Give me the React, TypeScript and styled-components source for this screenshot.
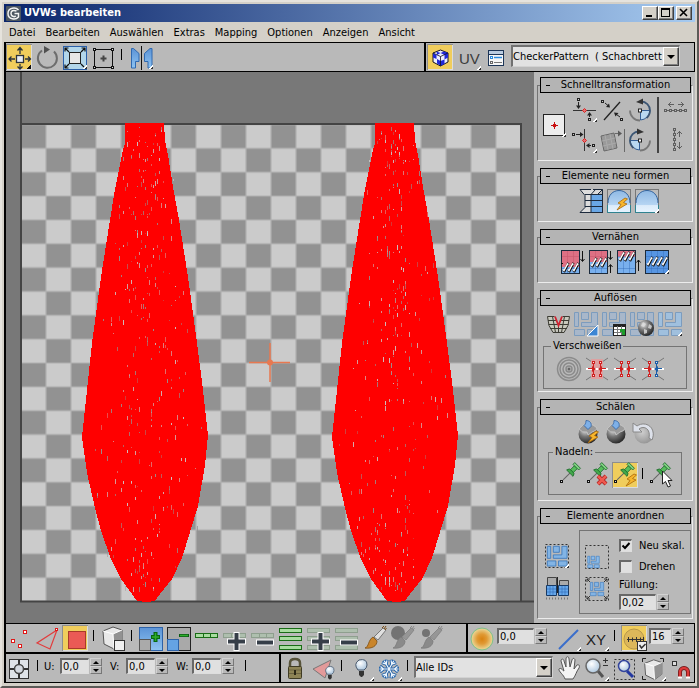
import React, { useState } from 'react';
import styled, { createGlobalStyle, css } from 'styled-components';

const GlobalStyle = createGlobalStyle`
  * { box-sizing: border-box; }
  body { margin: 0; background: #d4d0c8; }
  body, button, input, select, legend {
    font-family: "DejaVu Sans Condensed", "DejaVu Sans", sans-serif;
    font-size: 11px;
    color: #000;
  }
  button { padding: 0; border: 0; background: none; }
`;

const face = '#b9b9b9';

/* ---------- window frame ---------- */

const Window = styled.div`
  display: flex;
  flex-direction: column;
  min-height: 100vh;
  padding: 2px 2px 3px;
  background: #d4d0c8;
  border: 2px solid;
  border-color: #e6e3dd #5c5a57 #5c5a57 #e6e3dd;
  white-space: nowrap;
`;

const TitleBar = styled.header`
  display: flex;
  align-items: center;
  height: 18px;
  padding: 0 3px 0 2px;
  background: linear-gradient(90deg, #0a246a, #a6caf0);
`;

const Title = styled.h1`
  flex: 1;
  margin: 0 0 0 3px;
  font-size: 11px;
  line-height: 18px;
  font-weight: bold;
  color: #fff;
`;

const CaptionButton = styled.button<{ $apart?: boolean }>`
  width: 16px;
  height: 14px;
  margin-left: ${(p) => (p.$apart ? 2 : 0)}px;
  background: #d4d0c8;
  border: 1px solid;
  border-color: #fff #404040 #404040 #fff;
  box-shadow: inset -1px -1px #808080;
  svg { display: block; }
`;

const MenuBar = styled.nav`
  display: flex;
  gap: 10px;
  height: 20px;
  padding: 1px 5px 0;
`;

const MenuItem = styled.button`
  line-height: 19px;
`;

/* ---------- tool bars ---------- */

const Bar = styled.div<{ $top: number; $bottom: number }>`
  display: flex;
  background: ${face};
  border: solid #000;
  border-width: ${(p) => p.$top}px 1px ${(p) => p.$bottom}px 2px;
`;

const Section = styled.div<{ $width?: number; $divided?: boolean }>`
  display: flex;
  align-items: center;
  gap: 2px;
  height: 28px;
  ${(p) => (p.$width ? css`flex: 0 0 ${p.$width}px;` : css`flex: 1;`)}
  ${(p) => p.$divided && css`border-left: 2px solid #000; padding-left: 1px;`}
`;

const ToolButton = styled.button<{ $active?: boolean }>`
  flex: none;
  width: 26px;
  height: 26px;
  svg { display: block; overflow: visible; }
  ${(p) =>
    p.$active &&
    css`
      background: #f0cd5c;
      box-shadow: inset 1px 1px #8e8e8e, inset -1px -1px #dcdcdc;
    `}
`;

const Tick = styled.span`
  flex: none;
  align-self: flex-start;
  width: 8px;
  height: 11px;
  margin-top: 6px;
  background: linear-gradient(#000, #000) 3px 0 / 1px 100% no-repeat;
`;

const Field = styled.label`
  display: flex;
  align-items: center;
  gap: 1px;
  margin: 0 6px 4px 0;
`;

const FieldName = styled.span`
  width: 15px;
`;

const NumberInput = styled.input<{ $width: number }>`
  width: ${(p) => p.$width}px;
  height: 16px;
  padding: 0 1px;
  background: #e0e0e0;
  border: solid;
  border-width: 2px 1px 1px 2px;
  border-color: #686868 #dedede #dedede #686868;
  outline: none;
`;

const Spinner = styled.span`
  display: flex;
  flex-direction: column;
  width: 12px;
`;

const SpinButton = styled.button<{ $down?: boolean }>`
  height: 8px;
  border: 1px solid;
  border-color: #d2d2d2 #777 #777 #d2d2d2;
  display: grid;
  place-items: center;
  &::after {
    content: '';
    border: solid transparent;
    border-width: 0 3px 3px;
    border-bottom-color: #000;
    transform: ${(p) => (p.$down ? 'rotate(180deg)' : 'none')};
  }
`;

const Combo = styled.div<{ $width?: number }>`
  position: relative;
  ${(p) => (p.$width ? css`width: ${p.$width}px;` : css`flex: 1;`)}
  margin: 0 1px 2px 0;
`;

const Select = styled.select`
  appearance: none;
  display: block;
  width: 100%;
  height: 22px;
  padding: 0 16px 0 0;
  background: #e2e2e2;
  border: solid;
  border-width: 2px 1px 1px 2px;
  border-color: #717171 #d2d2d2 #d2d2d2 #717171;
  border-radius: 0;
  outline: none;
`;

const ComboArrow = styled.span`
  position: absolute;
  top: 2px;
  right: 1px;
  bottom: 1px;
  width: 16px;
  display: grid;
  place-items: center;
  pointer-events: none;
  background: #d4d0c8;
  border: 1px solid;
  border-color: #fff #404040 #404040 #fff;
  box-shadow: inset -1px -1px #808080;
  &::after {
    content: '';
    border: solid transparent;
    border-width: 4px 4px 0;
    border-top-color: #000;
  }
`;

/* ---------- main area ---------- */

const Main = styled.main`
  display: flex;
  flex: 1;
`;

const Viewport = styled.div`
  flex: 1;
  min-width: 0;
  background: #787878;
  border-left: 2px solid #000;
  svg { display: block; width: 100%; height: auto; }
`;

const Sidebar = styled.aside`
  flex: 0 0 161px;
  display: flex;
  flex-direction: column;
  gap: 7px;
  padding: 5px 2px 3px 3px;
  background: ${face};
`;

const RolloutHeader = styled.button`
  position: relative;
  display: block;
  width: calc(100% - 5px);
  height: 16px;
  margin: 0 2px 0 3px;
  padding: 0 10px;
  line-height: 14px;
  text-align: center;
  background: #b4b4b4;
  border: 1px solid #000;
  &::before {
    content: '';
    position: absolute;
    left: 5px;
    top: 7px;
    width: 4px;
    height: 1px;
    background: #000;
  }
`;

const RolloutBody = styled.div<{ $bottom: number }>`
  margin-top: -8px;
  padding: 11px 0 ${(p) => p.$bottom}px;
  border: 1px solid;
  border-color: #747474 #ececec #ececec #747474;
`;

const ToolRow = styled.div<{ $indent?: number; $gap?: number }>`
  display: flex;
  align-items: center;
  gap: ${(p) => p.$gap ?? 2}px;
  padding-left: ${(p) => p.$indent ?? 0}px;
`;

const QuickTools = styled.div`
  display: flex;
  align-items: center;
  justify-content: center;
  gap: 4px;
`;

const QuickGrid = styled.div<{ $columns: number }>`
  display: grid;
  grid-template-columns: repeat(${(p) => p.$columns}, 26px);
  gap: 4px 2px;
`;

const Rule = styled.span`
  align-self: stretch;
  width: 2px;
  background: #444;
`;

const Group = styled.fieldset<{ $indent: number; $above: number; $pad: number }>`
  min-width: 0;
  margin: ${(p) => p.$above}px ${(p) => p.$indent}px 0;
  padding: 4px 0 6px ${(p) => p.$pad}px;
  border: 1px solid #747474;
`;

const Legend = styled.legend`
  margin-left: -5px;
  padding: 0 2px;
  line-height: 12px;
`;

const Arrange = styled.div`
  display: flex;
  align-items: center;
  gap: 9px;
  padding: 2px 1px 0 6px;
`;

const IconColumn = styled.div`
  display: flex;
  flex-direction: column;
  gap: 6px;
`;

const ArrangeBox = styled.div`
  flex: 1;
  display: flex;
  align-items: center;
  gap: 9px;
  padding: 4px 0 3px 4px;
  border: 1px solid #747474;
`;

const Options = styled.div`
  display: flex;
  flex-direction: column;
`;

const CheckLabel = styled.label`
  display: flex;
  align-items: center;
  gap: 7px;
  height: 21px;
`;

const OptionLabel = styled.label`
  line-height: 16px;
`;

const CheckBox = styled.input`
  appearance: none;
  width: 13px;
  height: 13px;
  margin: 0;
  background: #e0e0e0;
  border: solid;
  border-width: 2px 1px 1px 2px;
  border-color: #686868 #dedede #dedede #686868;
  &:checked {
    background: #e0e0e0
      url("data:image/svg+xml,%3Csvg xmlns='http://www.w3.org/2000/svg' viewBox='0 0 10 10'%3E%3Cpath d='M1.5 4.5 4 7 8.500 2' fill='none' stroke='%23000' stroke-width='2'/%3E%3C/svg%3E")
      center / 10px 10px no-repeat;
  }
`;

const FieldRow = styled.div`
  display: flex;
  gap: 1px;
  margin-top: 1px;
`;

/* ---------- icons ---------- */

const Svg = ({ children }: { children: React.ReactNode }) => (
  <svg width="26" height="26" viewBox="0 0 26 26" fill="none" aria-hidden="true">
    {children}
  </svg>
);

const Corner = ({ dark, x = 0, y = 0 }: { dark?: boolean; x?: number; y?: number }) => (
  <g transform={`translate(${x} ${y})`} shapeRendering="crispEdges">
    <path d="M25 20v5h-5z" fill={dark ? '#111' : '#fff'} />
    {!dark && <path d="M24 23h1v2h-2v-1h1z" fill="#333" />}
  </g>
);

const Gradients = () => (
  <svg width="0" height="0" display="block" aria-hidden="true">
    <defs>
      <linearGradient id="blue" x1="0" y1="0" x2="0" y2="1">
        <stop offset="0" stopColor="#5b93d6" /><stop offset="1" stopColor="#8fc4f2" />
      </linearGradient>
      <linearGradient id="sky" x1="0" y1="0" x2="0" y2="1">
        <stop offset="0" stopColor="#8fb9e4" /><stop offset=".65" stopColor="#b5d4f2" /><stop offset=".7" stopColor="#dcebfa" /><stop offset="1" stopColor="#e6f3fe" />
      </linearGradient>
      <radialGradient id="ball" cx=".35" cy=".3" r=".75">
        <stop offset="0" stopColor="#e0e0e0" /><stop offset=".45" stopColor="#777" /><stop offset="1" stopColor="#222" />
      </radialGradient>
      <radialGradient id="paleBall" cx=".4" cy=".4" r=".7">
        <stop offset="0" stopColor="#cfcfcf" /><stop offset="1" stopColor="#8f8f8f" />
      </radialGradient>
      <radialGradient id="sun">
        <stop offset="0" stopColor="#d98210" /><stop offset=".45" stopColor="#e09a35" /><stop offset=".9" stopColor="#e9cf8a" /><stop offset="1" stopColor="#b9cf9a" />
      </radialGradient>
      <radialGradient id="glass" cx=".4" cy=".35" r=".7">
        <stop offset="0" stopColor="#fff" /><stop offset="1" stopColor="#a9c4dc" />
      </radialGradient>
    </defs>
  </svg>
);

const Bolt = ({ x, y }: { x: number; y: number }) => (
  <path transform={`translate(${x} ${y})`} d="M8 0 1 5l3 1.500L0 12l10-6-3.500-1.500L10.500 1z" fill="#f7b52c" stroke="#a8670a" strokeWidth=".8" />
);

const MoveIcon = () => (
  <Svg>
    <g stroke="#2b333c" strokeWidth="1.300">
      <rect x="10.500" y="11.500" width="7" height="7" fill="#e8edf4" />
      <path d="M14 10V4M11.500 6.500 14 3.500l2.500 3M14 20v5M11.500 22.500 14 25l2.500-2.500M9 15H3M5.500 12.500 3 15l2.500 2.500M19 15h5M22 12.500l2.500 2.500-2.500 2.500" />
    </g>
    <Corner dark />
  </Svg>
);
const RotateIcon = () => (
  <Svg>
    <path d="M8 6.500A9.500 9.500 0 1 0 20 7.500" stroke="#6d6d6d" strokeWidth="2" />
    <path d="m10 2 6 3.500-6 4z" fill="#505050" />
  </Svg>
);
const ScaleIcon = () => (
  <Svg>
    <rect x="1.500" y="2.500" width="23" height="23" fill="#b3d6ea" stroke="#2b5fa8" />
    <rect x="7.500" y="8.500" width="11" height="11" fill="#e6e6e6" stroke="#222" />
    <path d="m7 8-3.500-3.500M3 7.500V4h3.500M19 8l3.500-3.500M19.500 4H23v3.500M7 20l-3.500 3.500M3 20.500V24h3.500M19 20l3 3" stroke="#111" strokeWidth="1.200" />
    <Corner />
  </Svg>
);
const FreeformIcon = () => (
  <Svg>
    <rect x="4.500" y="5.500" width="18" height="18" stroke="#111" />
    <g fill="#ddd" stroke="#111">
      <rect x="3.500" y="4.500" width="2" height="2" /><rect x="21.500" y="4.500" width="2" height="2" />
      <rect x="3.500" y="22.500" width="2" height="2" /><rect x="21.500" y="22.500" width="2" height="2" />
    </g>
    <path d="M13.500 11.500v6M10.500 14.500h6" stroke="#444" strokeWidth="2" />
  </Svg>
);
const MirrorIcon = () => (
  <Svg>
    <path d="M3.500 4.500h2l5.500 5v8H7.500V24h-4zM24 4.500h-2l-5.500 5v8H20V24h4z" fill="url(#blue)" stroke="#2f69b0" />
    <path d="M13.500 2v24" stroke="#111" />
    <Corner />
  </Svg>
);
const CheckerCubeIcon = () => (
  <Svg>
    <path d="m13.500 6 7.500 3v9l-7.500 4L6 18V9z" fill="#eef" stroke="#112" />
    <path d="m9.500 7.500 4 1.500L17 7.500 21 9l-3.500 2-4-2-3.500 2zM6 9l3.500 2v4L6 13.500zM10 15l3.500 2v4.500L10 19.500zM17.500 11l3.500-2v4.500l-3.500 2zM13.500 17l4-1.500V20l-4 2z" fill="#2028d8" />
    <path d="m6 9 7.500 3.500L21 9M13.500 12.500V22" stroke="#112" strokeWidth=".8" />
  </Svg>
);
const UvIcon = () => (
  <Svg>
    <text x="4" y="20" fontSize="15" fontFamily="Liberation Sans, sans-serif" fill="#3c3c3c">UV</text>
    <Corner x={1} y={1} />
  </Svg>
);
const ListIcon = () => (
  <Svg>
    <rect x="5.500" y="6.500" width="15" height="15" fill="#f6f6f6" stroke="#1d3557" />
    <path d="M6 7h14v3H6z" fill="#b9cbe0" /><path d="M6 10.500h14" stroke="#1d3557" />
    <path d="M11 13.500h8" stroke="#2a8be0" strokeWidth="1.500" /><path d="M11 18.500h8" stroke="#777" />
    <rect x="7.500" y="12.500" width="2" height="2" stroke="#2a8be0" /><rect x="7.500" y="17.500" width="2" height="2" stroke="#666" />
  </Svg>
);

const PivotIcon = () => (
  <Svg>
    <rect x="2.500" y="2.500" width="21" height="21" fill="#ececec" stroke="#222" />
    <path d="M13.500 10v7M10 13.500h7" stroke="#c81010" /><rect x="12" y="12" width="3" height="3" fill="#c81010" />
    <Corner />
  </Svg>
);
const AlignHIcon = () => (
  <Svg>
    <path d="M2 13.500h23" stroke="#333" />
    <path d="M7.500 5v6M18.500 20v-4" stroke="#222" />
    <path d="M5 8.500h5L7.500 12zM16 18.500h5L18.500 15z" fill="#222" />
    <rect x="6.500" y="1.500" width="2" height="2" stroke="#222" fill="#ccc" /><rect x="17.500" y="21.500" width="2" height="2" stroke="#222" fill="#ccc" />
    <path d="m13.500 11.500 2 2-2 2-2-2z" fill="#e27070" stroke="#d22" />
    <Corner x={1} />
  </Svg>
);
const AlignVIcon = () => (
  <Svg>
    <path d="M13.500 2v22" stroke="#333" />
    <path d="M5 7.500h6M20 18.500h-4" stroke="#222" />
    <path d="M9 5v5l3.500-2.500zM18.500 16v5L15 18.500z" fill="#222" />
    <rect x="1.500" y="6.500" width="2" height="2" stroke="#222" fill="#ccc" /><rect x="21.500" y="17.500" width="2" height="2" stroke="#222" fill="#ccc" />
    <path d="m13.500 11.500 2 2-2 2-2-2z" fill="#e27070" stroke="#d22" />
    <Corner x={1} y={1} />
  </Svg>
);
const LinearIcon = () => (
  <Svg>
    <path d="M5 23 21 5" stroke="#222" strokeWidth="1.300" />
    <path d="m6 6 3 2.500M21 20l-3.500-2.500" stroke="#222" />
    <path d="M11 10.500 10 6.500 7 10zM15 15.500l1.500 4L19.500 16z" fill="#222" />
    <rect x="2.500" y="3.500" width="2" height="2" stroke="#222" fill="#ccc" /><rect x="21.500" y="21.500" width="2" height="2" stroke="#222" fill="#ccc" />
  </Svg>
);
const SkewIcon = () => (
  <Svg>
    <path d="m2 9 13-3 3 15-13 3z" fill="#9a9a9a" stroke="#696969" />
    <path d="m6 8 3 15M11 7l3 15M3 14l13-3M4 19l13-3" stroke="#aaa" />
    <path d="M16 6.500h4M25.500 2v23" stroke="#696969" /><path d="M19 3.500v6l4-3z" fill="#595959" />
  </Svg>
);
const QuarterIcon = ({ flip }: { flip?: boolean }) => (
  <Svg>
    <g transform={flip ? 'matrix(-1 0 0 1 26 0)' : undefined}>
      <path d="M13.500 13.500H23A10 10 0 0 1 13.500 23z" fill="#b9d8f0" stroke="#345f94" />
      <path d="M3 13.500A10 10 0 0 0 13 23.500" stroke="#777" strokeWidth="1.800" />
      <path d="M14 4.500c5 0 9 4 9 9a10 10 0 0 1-3.500 7.500" stroke="#3c5674" strokeWidth="1.800" />
      <path d="m9 5 7-3.500v6z" fill="#333" /><rect x="11.500" y="12" width="3" height="3" fill="#fff" stroke="#222" />
    </g>
  </Svg>
);
const SpreadIcon = ({ vertical }: { vertical?: boolean }) => (
  <Svg>
    <g stroke="#5f5f5f" transform={vertical ? 'matrix(0 1 1 0 -2 0)' : undefined}>
      <path
        d={vertical
          ? 'M10 18.500H4M7 16l-2.500 2.500L7 21M15 18.500h7M19 16l2.500 2.500L19 21'
          : 'M11 7.500H5M8 5 5.500 7.500 8 10M15 7.500h6M18 5l2.500 2.500L18 10'}
      />
      {[2, 7, 12, 17, 22].map((x) => <rect key={x} x={x - 0.5} y="12.500" width="2" height="2" />)}
      <path d="M4 13.500h2M9 13.500h2M14 13.500h2M19 13.500h2" />
    </g>
  </Svg>
);

const StraightenIcon = () => (
  <Svg>
    <path d="M2 1.500h22.500l-5 5H13v18H2l5-5v-12z" fill="#dcdcdc" />
    <path d="M13 6.500h11.500v18H13z" fill="#69a7e6" />
    <path d="M2 1.500h11M15 1.500h9.500V6M2 1.500l5 6v12l-5 5M17.500 1.500l-4.500 5M24.500 1.500l-5 5M7 6.500h18M2 24.500h23M7 12.500h18M7 18.500h18M13 6v19M24.500 6v19" stroke="#1c2a3c" />
  </Svg>
);
const RelaxIcon = ({ bolt }: { bolt?: boolean }) => (
  <Svg>
    <rect x="1.500" y="1.500" width="23" height="23" fill="#bcbcbc" stroke="#777" />
    <path d="M2 24V14C2 7 7 2.500 13 2.500S24 7 24 14v10z" fill="url(#sky)" />
    <path d="M2 15C2 7 7 2.500 13 2.500S24 7 24 15" stroke="#34639c" />
    <path d="M1.500 17v7.500h23V17" stroke="#2f8390" />
    {bolt ? <Bolt x={11} y={10} /> : <Corner />}
  </Svg>
);

const StitchIcon = ({ kind }: { kind: number }) => {
  const seam = [18, 13, 7, 12][kind];
  const wide = kind === 3;
  const w = wide ? 23 : 18;
  const xs = wide ? [3, 8, 13, 18] : [3, 8, 13];
  return (
    <Svg>
      <rect x="1.500" y="1.500" width={w} height="23" fill={wide ? '#5795e2' : '#79b0ee'} stroke="#1b2a3c" />
      {!wide && <rect x="2" y="2" width="17" height={seam - 2} fill="#de7084" />}
      {!wide && <path d={`M7.500 2v${seam - 2}M13.500 2v${seam - 2}M2 7.500h17`} stroke="#c9586e" strokeOpacity=".6" />}
      <path d={wide ? 'M7.500 2v22M13.500 2v22M19.500 2v22M2 7.500h22M2 19.500h22' : `M7.500 ${seam}V24M13.500 ${seam}V24M2 19.500h17`} stroke="#2f68b6" strokeOpacity=".4" />
      {xs.map((x) => (
        <g key={x}>
          <path d={`M${x} ${seam + 3}l1.500 1L${x + 5} ${seam - 3}l1 .5`} stroke="#111" strokeWidth="2.500" />
          <path d={`M${x} ${seam + 2.5}l1 1L${x + 4.5} ${seam - 3}l1 .5`} stroke="#fff" strokeWidth="1.400" />
        </g>
      ))}
      {kind === 0 && <path d="M22.500 2v10M20.500 10l2 2.500 2-2.500M1 14.500h2" stroke="#111" />}
      {kind === 1 && <path d="M22.500 2v8M20.500 8l2 2.500 2-2.500M22.500 24v-8M20.500 18l2-2.500 2 2.500" stroke="#111" />}
      {kind === 2 && <path d="M22.500 22V11M20.500 13.500l2-2.500 2 2.500" stroke="#111" />}
      {wide && <Corner />}
    </Svg>
  );
};

const BasketIcon = () => (
  <Svg>
    <g transform="translate(1 2)">
      <path d="M1.500 4.500h7l4 8 4-8h7l-1.500 10-4 5H7l-4-5z" fill="#c9c9bd" />
      <path d="M1.500 4.500h7M16.500 4.500h7M2 8.500h8M15 8.500h8M2.500 12.500h20M4 16.500h17M7 20.500h11M1.500 4.500l1.500 9 4 7h11l4-7 1.500-9M6.500 4.500l3 16M18.500 4.500l-3 16M12.500 13v8" stroke="#3c3c34" />
      <path d="m9 4.500 3.500 9 3.500-9" stroke="#cf2230" strokeWidth="1.800" />
    </g>
  </Svg>
);
const Pieces = ({ fill = '#a8b7ca', stroke = '#7c9cbe' }: { fill?: string; stroke?: string }) => (
  <g fill={fill} stroke={stroke}>
    <path d="M1.500 1.500h4v14h-4zM8.500 1.500h7v7h-7zM18.500 1.500h6v14h-16v-4h10zM1.500 18.500h10v6h-10zM14.500 18.500h10v6h-10z" />
  </g>
);
const FlattenIcon = ({ kind }: { kind: number }) => (
  <Svg>
    <g transform="translate(0 1)">
      <Pieces fill={kind === 3 ? '#a0c0de' : undefined} />
      {kind === 0 && <path d="M25 14v11H14z" fill="#3c86d4" stroke="#fff" />}
      {kind === 1 && (
        <>
          <rect x="12.500" y="13.500" width="12" height="11" fill="#fff" stroke="#222" />
          <path d="M13 15h11" stroke="#222" strokeWidth="2" /><path d="M16.500 15v9M20.500 15v9M13 18.500h11M13 21.500h11" stroke="#777" />
          <path d="M19 18h5v3h-5zM21 21h3v3h-3z" fill="#1f9c2c" />
        </>
      )}
      {kind === 2 && (
        <>
          <circle cx="17" cy="17" r="8" fill="url(#ball)" />
          <path d="m14 11 3 2-2 3-3-1zM20 13l3 2-1 3-3-1zM15 18l3 1v3l-3 1z" fill="#ddd" fillOpacity=".8" />
        </>
      )}
      {kind === 3 && <Corner />}
    </g>
  </Svg>
);
const TargetIcon = () => (
  <Svg>
    {[3, 6, 9, 11.5].map((r) => <circle key={r} cx="13" cy="13" r={r} stroke="#8b8b8b" strokeWidth="1.500" />)}
    <circle cx="13" cy="13" r="1.500" fill="#666" />
  </Svg>
);
const WeldIcon = ({ kind }: { kind: number }) => {
  const right = kind === 2 ? '#1b5ea8' : '#cf2222';
  return (
    <Svg>
      <path d="m2 2 6 4M24 2l-6 4M2 24l6-4M24 24l-6-4" stroke="#777" />
      {kind === 0 && <path d="M7 3h12v20H7z" fill="#dea0a0" />}
      <path d="M2 13h22" stroke="#fff" strokeWidth="2" />
      <path d="M9.500 7v12" stroke="#cf2222" /><path d="M16.500 7v12" stroke={right} />
      <path d="M4 12.500h4" stroke="#cf2222" /><path d="M8 10v6l4-3z" fill="#cf2222" />
      <path d="M22 12.500h-4" stroke={right} /><path d="M18 10v6l-4-3z" fill={right} />
      <g stroke="#cf2222" fill="#f3e3e3"><rect x="8.500" y="5.500" width="2" height="2" /><rect x="8.500" y="18.500" width="2" height="2" /></g>
      <g stroke={right} fill="#f3e3e3"><rect x="15.500" y="5.500" width="2" height="2" /><rect x="15.500" y="18.500" width="2" height="2" /></g>
    </Svg>
  );
};

const PeelIcon = ({ kind }: { kind: number }) => (
  <Svg>
    <circle cx="13" cy="15" r="9.500" fill={kind === 2 ? 'url(#paleBall)' : 'url(#ball)'} />
    {kind < 2 && (
      <>
        <path d="M4 10q3 4 8 3l1 3 4-3q5-1 5-4l-4-3H8z" fill="#9a9a9a" stroke="#c9c9c9" strokeWidth=".8" />
        <path d="M11 1.500c4 0 6 3 5 6l-3 3-4-4c1-1 2-2 2-5z" fill="#7eb0e8" stroke="#2f5f9f" strokeWidth=".8" />
      </>
    )}
    {kind === 0 && <Bolt x={13} y={12} />}
    {kind === 2 && <path d="M2 4v9h9L8 10c5-4 12 0 10 9l3 2C26 9 15 1 6 7z" fill="#dde1ea" stroke="#888" />}
  </Svg>
);
const PinIcon = ({ kind }: { kind: number }) => (
  <Svg>
    <g transform="translate(15 8) rotate(45)">
      <path d="M0 4v10" stroke="#666" />
      <path d="M-4.500 4.500q0-3.500 4.500-3.500t4.500 3.500z" fill="#43a84b" stroke="#1c6a2c" strokeWidth=".8" />
      <path d="M-2-4h4v5.500h-4z" fill="#57bd5c" stroke="#1c6a2c" strokeWidth=".8" />
      <path d="M-4-6.500h8V-4h-8z" fill="#7fd080" stroke="#1c6a2c" strokeWidth=".8" />
    </g>
    <rect x="2.500" y="18.500" width="2" height="2" fill="#ddd" stroke="#111" />
    {kind === 1 && <path d="m13 14 8 8M21 14l-8 8" stroke="#a81c1c" strokeWidth="4" />}
    {kind === 1 && <path d="m13 14 8 8M21 14l-8 8" stroke="#ee5a50" strokeWidth="2.500" />}
    {kind === 2 && <Bolt x={14} y={12} />}
    {kind === 3 && <path d="M14.500 9v13l3-2.500 2.500 5.500 2.500-1-2.500-5.500h4z" fill="#fff" stroke="#222" />}
  </Svg>
);

const Dashed = () => <rect x="1.500" y="1.500" width="23" height="23" stroke="#333" strokeDasharray="2 2" />;
const PackIcon = ({ kind }: { kind: number }) => (
  <Svg>
    <Dashed />
    {kind === 0 && <g transform="matrix(.86 0 0 .86 2 2)"><Pieces fill="#83b4e4" stroke="#3a78bd" /></g>}
    {kind === 1 && <g transform="matrix(.5 0 0 .5 3 11.500)"><Pieces fill="#8dbbe8" stroke="#2570c0" /></g>}
    {kind === 2 && (
      <>
        <g transform="matrix(.58 0 0 .58 5.500 5.500)"><Pieces fill="#83b4e4" stroke="#3a78bd" /></g>
        <path d="M3 6V3h3M3 3l3 3M20 3h3v3M23 3l-3 3M3 20v3h3M3 23l3-3M23 20v3h-3M23 23l-3-3" stroke="#333" />
      </>
    )}
    {kind === 0 && <Corner />}
  </Svg>
);
const RescaleIcon = () => (
  <Svg>
    <path d="M3.500 2.500h9v8h-9zM15.500 5.500h9v6h-9z" fill="#aaa" stroke="#444" />
    <path d="M2.500 10.500h10v10h-10zM14.500 10.500h10v10h-10z" fill="#66a8ec" stroke="#173a66" />
    <path d="M3 14h9M3 17h9M6 11v9M9 11v9M15 14h9M15 17h9M18 11v9M21 11v9" stroke="#2f68b6" strokeWidth=".6" />
    <path d="M13.500 2v16" stroke="#222" /><path d="M2 23.500h23" stroke="#777" strokeWidth="2" strokeDasharray="1 2" />
  </Svg>
);

const VertexIcon = () => (
  <Svg>
    <g fill="#fff" stroke="#e01818"><rect x="17.500" y="5.500" width="3" height="3" /><rect x="5.500" y="14.500" width="3" height="3" /><rect x="12.500" y="19.500" width="3" height="3" /></g>
  </Svg>
);
const EdgeIcon = () => (
  <Svg><path d="M23 5 3 18l13 6z" stroke="#e23c3c" strokeWidth="1.200" /><rect x="21.500" y="3.500" width="2" height="2" fill="#fff" stroke="#e01818" /></Svg>
);
const PolygonIcon = () => (
  <Svg><rect x="6.500" y="6.500" width="17" height="17" fill="#ea5a55" stroke="#a83a2a" /></Svg>
);
const Cube = () => (
  <>
    <path d="m3 6 10-4 9 3v13L14 24 4 19z" fill="#e8e8e8" stroke="#555" />
    <path d="m13 9 9-4v13l-8 6z" fill="#929292" /><path d="m3 6 10 3 9-4M13 9l1 15" stroke="#fff" />
  </>
);
const ElementIcon = () => (
  <Svg><Cube /><rect x="14.500" y="15.500" width="10" height="10" fill="#f0f0f0" stroke="#333" /></Svg>
);
const GrowIcon = ({ shrink }: { shrink?: boolean }) => (
  <Svg>
    <rect x="1.500" y="2.500" width="23" height="23" fill={shrink ? '#a9a9a9' : 'url(#blue)'} stroke={shrink ? '#222' : '#2d62a8'} />
    <rect x="1.500" y="14.500" width="11" height="11" fill={shrink ? '#65a3e4' : '#aaa'} stroke={shrink ? '#2d62a8' : '#555'} />
    {shrink ? <path d="M13 10.500h10" stroke="#0b5b13" strokeWidth="3" /> : <path d="M17.500 7v10M13 12h9" stroke="#086810" strokeWidth="4" />}
    <path d={shrink ? 'M14 10.500h8' : 'M17.500 8v8M14 12h7'} stroke="#2fae2c" strokeWidth="1.500" />
  </Svg>
);
const LoopIcon = ({ ring, sign }: { ring?: boolean; sign?: string }) => {
  const rows = ring ? [3.5, 11.5, 20.5] : [8.5];
  return (
    <Svg>
      <g opacity={sign ? 0.55 : 1}>
        {rows.map((y) => (
          <rect key={y} x="1.500" y={y} width="22" height="4" fill={sign ? '#a6c4a6' : '#a8dca0'} stroke={sign ? '#6c8a6c' : '#196c16'} />
        ))}
        {!ring && <path d="M9.500 8v5M16.500 8v5" stroke={sign ? '#6c8a6c' : '#196c16'} />}
      </g>
      {sign && <path d={sign === '+' ? 'M14.500 7v19M5 16.500h19' : 'M6 17.500h18'} stroke="#fff" strokeWidth="6" />}
      {sign && <path d={sign === '+' ? 'M14.500 8v17M6 16.500h17' : 'M7 17.500h16'} stroke="#363e48" strokeWidth="4" />}
    </Svg>
  );
};
const BrushIcon = ({ dot }: { dot?: number }) => (
  <Svg>
    {dot && <circle cx="8" cy="8" r={dot} fill="#737373" />}
    <path d="m21 3 3 2-8 10-4-3z" fill={dot ? '#969696' : '#e0e0e0'} stroke={dot ? '#888' : '#777'} />
    <path d="m11 12 4 4c0 5-5 8-12 7 4-1 3-8 8-11z" fill={dot ? '#8a8a8a' : '#c9852c'} stroke={dot ? '#7b7b7b' : '#7a4d14'} strokeWidth=".8" />
    <path d="m20 3 2-2M23 5l1.500-2M22 4l2-3" stroke={dot ? '#888' : '#7a4d14'} />
  </Svg>
);
const SoftIcon = ({ limit }: { limit?: boolean }) => (
  <Svg>
    <circle cx="13" cy="14" r={limit ? 10 : 11} fill={limit ? '#dcb75a' : 'url(#sun)'} stroke={limit ? '#b8984a' : '#84c08a'} />
    {limit && (
      <>
        <path d="M6 14.500h17M7.500 12v5M11.500 12.500v4M15.500 12v5M19.500 12.500v4M22.500 12v5" stroke="#333" />
        <rect x="16.500" y="16.500" width="9" height="9" fill="#eee" stroke="#333" /><path d="m18.500 20 2 3 4-4" stroke="#333" strokeWidth="1.500" />
      </>
    )}
  </Svg>
);
const LineIcon = () => (
  <Svg><path d="M4 24 23 5" stroke="#3a6ecb" strokeWidth="2" /><Corner x={1} y={1} /></Svg>
);
const XyIcon = () => (
  <Svg>
    <text x="3" y="20" fontSize="15" fontFamily="Liberation Sans, sans-serif" fill="#222">XY</text>
    <Corner x={1} y={1} />
  </Svg>
);
const AbsoluteIcon = () => (
  <Svg>
    <rect x="3.500" y="4.500" width="19" height="19" fill="#dfe3e8" stroke="#333" />
    <path d="M13 4v6M13 18v6M3 14h6M17 14h6" stroke="#333" strokeWidth="2" /><circle cx="13" cy="14" r="4.500" fill="#d5dae1" stroke="#444" strokeWidth="1.500" />
  </Svg>
);
const LockIcon = () => (
  <Svg>
    <path d="M8 12V8q0-4 5-4t5 4v4" stroke="#57533a" strokeWidth="2.500" />
    <rect x="6.500" y="11.500" width="13" height="12" rx="1" fill="#8d8355" stroke="#3f3b24" /><path d="M7 15h12M7 18.500h12" stroke="#6a6240" /><rect x="12" y="15" width="2" height="5" fill="#2c2817" />
  </Svg>
);
const Bulb = ({ x, y, s = 1 }: { x: number; y: number; s?: number }) => (
  <g transform={`matrix(${s} 0 0 ${s} ${x} ${y})`}>
    <path d="M3 11q-5-6 1-10 8-2 8 5 0 3-3 5z" fill="url(#glass)" stroke="#49586c" />
    <path d="M4 12h5v4l-2 2H6l-2-2z" fill="#333" />
  </g>
);
const FilterIcon = () => (
  <Svg><path d="M21 5 3 14l12 9z" fill="#e39a9a" stroke="#777" /><Bulb x={15} y={11} s={0.75} /></Svg>
);
const DisplayIcon = () => (
  <Svg><Bulb x={7} y={4} /><Corner x={1} y={1} /></Svg>
);
const FreezeIcon = () => (
  <Svg>
    {['#2463a8', '#f0f8ff'].map((c, i) => (
      <g key={c} stroke={c} strokeWidth={i ? 1.2 : 3}>
        {[30, 90, 150].map((a) => (
          <path key={a} transform={`rotate(${a} 13 14)`} d={i ? 'M13 4.500v19M10.500 5.500 13 8.500l2.500-3M10.500 22.500 13 19.500l2.500 3' : 'M13 4v20M10 5 13 8.500l3-3.500M10 23l3-3.500 3 3.500'} />
        ))}
      </g>
    ))}
    <Corner x={1} y={1} />
  </Svg>
);
const HandIcon = () => (
  <Svg>
    <path d="M9 24c-1-4-7-8-6-10 2-2 4 2 5 2L5 6c0-3 3-2 3 0l2 6V4c0-3 3-3 3 0l1 8 2-7c1-3 3-1 3 0l-1 9 3-4c2-1 3 1 2 3-3 4-3 7-6 11z" fill="#f4f4f4" stroke="#555" />
  </Svg>
);
const ZoomIcon = ({ region }: { region?: boolean }) => (
  <Svg>
    {region && <rect x="2.500" y="4.500" width="20" height="20" stroke="#333" strokeDasharray="2 2" />}
    <path d={region ? 'm15 16 6 6' : 'm14 16 5 6'} stroke={region ? '#2338a0' : '#555'} strokeWidth="3" />
    <circle cx={region ? 12 : 9} cy="11" r={region ? 5.5 : 7} fill="url(#glass)" stroke={region ? '#33449c' : '#666'} strokeWidth="1.500" />
    {!region && <path d="M21.500 3v5M19 5.500h5M19 10.500h5" stroke="#333" />}
    {!region && <Corner y={1} />}
  </Svg>
);
const ExtentsIcon = () => (
  <Svg>
    <g transform="matrix(.9 0 0 .9 2 3)"><Cube /></g>
    <path d="M2.500 7V3.500H6M20 3.500h3.500V7M2.500 21v3.500H6" stroke="#222" />
    <Corner x={1} y={1} />
  </Svg>
);
const SnapIcon = () => (
  <Svg>
    <g transform="translate(-3 0)">
      <rect x="7.500" y="6.500" width="4" height="4" fill="#ddd" stroke="#333" />
      <path d="M15 23v-6a4 4 0 0 1 8 0v6" stroke="#6b1414" strokeWidth="4" /><path d="M15 22v-5a4 4 0 0 1 8 0v5" stroke="#dc3a3a" strokeWidth="2.500" />
      <path d="M13 22.500h4M21 22.500h4" stroke="#fff" strokeWidth="2" />
    </g>
  </Svg>
);

/* ---------- UV canvas ---------- */

const SHELL =
  'M125 123H164L165 141 168 155 173 187 179 220 188 277 197 343 203 390 208 435 205 465 198 506 190 532 182 558 172 579 160 594 155 601 147 602 137 601 132 594 121 579 111 559 101 531 95 508 87 473 82 437 87 390 92 343 101 277 110 220 114 195 119 170 123 150 125 144Z';

// Gaps between mesh lines, gathered in columns four units apart.
function makeSpecks(seed: number) {
  let s = seed;
  const rnd = () => {
    s = (s * 16807) % 2147483647;
    return s / 2147483647;
  };
  return Array.from({ length: 330 }, () => {
    const y = 126 + rnd() * 464;
    const half = y < 437 ? 16 + ((y - 126) / 311) * 34 : 50 - ((y - 437) / 160) ** 2 * 40;
    const x = 145 + (rnd() + rnd() + rnd() - 1.5) * half * 1.1;
    return {
      x: Math.round(x / 4) * 4 + (rnd() > 0.6 ? 2 : 0) - 1,
      y: Math.round(y),
      h: 1 + Math.floor(rnd() * 5),
      fill: rnd() > 0.45 ? '#cbcbcb' : '#949494',
      opacity: 0.35 + rnd() * 0.6,
    };
  });
}
const shells = [{ dx: 0, specks: makeSpecks(4711) }, { dx: 250, specks: makeSpecks(9203) }];

const UvCanvas = () => (
  <svg viewBox="6 72 528 551" role="img" aria-label="UV-Ansicht">
    <defs>
      <pattern id="checker" x="21" y="124.500" width="50" height="47.700" patternUnits="userSpaceOnUse">
        <rect width="50" height="47.700" fill="#cbcbcb" />
        <path d="M0 0h25v23.850H0zM25 23.850h25V47.700H25z" fill="#929292" />
        <path d="M0 0H50M0 23.850H50M0 47.700H50M0 0V47.700M25 0V47.700M50 0V47.700" stroke="#b0b0b0" strokeWidth="1.200" />
      </pattern>
    </defs>
    <rect x="6" y="72" width="528" height="551" fill="#787878" />
    <rect x="21" y="124" width="500" height="477" fill="url(#checker)" />
    <path d="M21 72V602M20 124H522M20 601.500H534M521 124V602" stroke="#444" strokeWidth="2" fill="none" />
    {shells.map((shell) => (
      <g key={shell.dx} transform={`translate(${shell.dx} 0)`} shapeRendering="crispEdges">
        <path d={SHELL} fill="#f00" />
        {shell.specks.map((p, i) => (
          <rect key={i} x={p.x} y={p.y} width="1" height={p.h} fill={p.fill} opacity={p.opacity} />
        ))}
      </g>
    ))}
    <path d="M249 362.500H290M270 343V382" stroke="#e87850" strokeWidth="1.500" /><circle cx="270" cy="362.500" r="3" fill="#e87850" />
  </svg>
);

/* ---------- building blocks ---------- */

const Tool = ({ label, active, children }: { label: string; active?: boolean; children: React.ReactNode }) => (
  <ToolButton type="button" aria-label={label} aria-pressed={active} $active={active}>{children}</ToolButton>
);

const NumberBox = ({ id, label, value, width }: { id: string; label: string; value: string; width: number }) => {
  const [text, setText] = useState(value);
  return (
    <>
      <NumberInput id={id} aria-label={label} $width={width} value={text} onChange={(e) => setText(e.target.value)} />
      <Spinner>
        <SpinButton type="button" aria-label={`${label} erhöhen`} />
        <SpinButton type="button" aria-label={`${label} verringern`} $down />
      </Spinner>
    </>
  );
};

const Rollout = ({ title, bottom = 7, children }: { title: string; bottom?: number; children: React.ReactNode }) => (
  <section>
    <RolloutHeader type="button" aria-expanded="true">{title}</RolloutHeader>
    <RolloutBody $bottom={bottom}>{children}</RolloutBody>
  </section>
);

const menus = ['Datei', 'Bearbeiten', 'Auswählen', 'Extras', 'Mapping', 'Optionen', 'Anzeigen', 'Ansicht'];

export default function App() {
  return (
    <>
      <GlobalStyle />
      <Gradients />
      <Window>
        <TitleBar>
          <svg width="15" height="15" viewBox="0 0 15 15" fill="none" aria-hidden="true">
            <rect width="15" height="15" rx="1" fill="#4b5560" />
            <path d="M12.500 4C10 1 2 1 2 7.500S10 14 12.500 11V7.500H8.500M10.500 5C7 3.500 5 5 5 7.500s3 4 5 2.500" stroke="#f2f2f2" strokeWidth="1.500" />
          </svg>
          <Title>UVWs bearbeiten</Title>
          <CaptionButton type="button" aria-label="Minimieren">
            <svg width="14" height="12" viewBox="0 0 14 12"><path d="M3 8h6v2H3z" /></svg>
          </CaptionButton>
          <CaptionButton type="button" aria-label="Maximieren">
            <svg width="14" height="12" viewBox="0 0 14 12"><path d="M2 1h9v9H2zM3 3v6h7V3z" fillRule="evenodd" /></svg>
          </CaptionButton>
          <CaptionButton type="button" aria-label="Schließen" $apart>
            <svg width="14" height="12" viewBox="0 0 14 12"><path d="m3 2 7 7M10 2 3 9" stroke="#000" strokeWidth="1.600" /></svg>
          </CaptionButton>
        </TitleBar>

        <MenuBar aria-label="Hauptmenü">
          {menus.map((m) => <MenuItem key={m} type="button">{m}</MenuItem>)}
        </MenuBar>

        <Bar $top={1} $bottom={1}>
          <Section>
            <Tool label="Verschieben" active><MoveIcon /></Tool>
            <Tool label="Rotieren"><RotateIcon /></Tool>
            <Tool label="Skalieren"><ScaleIcon /></Tool>
            <Tool label="Freiform"><FreeformIcon /></Tool>
            <Tick />
            <Tool label="Spiegeln"><MirrorIcon /></Tool>
          </Section>
          <Section $width={270} $divided>
            <Tool label="Karte anzeigen" active><CheckerCubeIcon /></Tool>
            <Tool label="UV-Ebene"><UvIcon /></Tool>
            <Tool label="Optionen anzeigen"><ListIcon /></Tool>
            <Combo $width={169}>
              <Select aria-label="Textur">
                <option>{'CheckerPattern\u00a0 ( Schachbrett'}</option>
              </Select>
              <ComboArrow />
            </Combo>
          </Section>
        </Bar>

        <Main>
          <Viewport><UvCanvas /></Viewport>
          <Sidebar>
            <Rollout title="Schnelltransformation">
              <QuickTools>
                <Tool label="Drehpunkt"><PivotIcon /></Tool>
                <QuickGrid $columns={3}>
                  <Tool label="Horizontal ausrichten"><AlignHIcon /></Tool>
                  <Tool label="Linear ausrichten"><LinearIcon /></Tool>
                  <Tool label="90° gegen Uhrzeigersinn"><QuarterIcon /></Tool>
                  <Tool label="Vertikal ausrichten"><AlignVIcon /></Tool>
                  <Tool label="An Kante ausrichten"><SkewIcon /></Tool>
                  <Tool label="90° im Uhrzeigersinn"><QuarterIcon flip /></Tool>
                </QuickGrid>
                <Rule />
                <QuickGrid $columns={1}>
                  <Tool label="Horizontaler Abstand"><SpreadIcon /></Tool>
                  <Tool label="Vertikaler Abstand"><SpreadIcon vertical /></Tool>
                </QuickGrid>
              </QuickTools>
            </Rollout>

            <Rollout title="Elemente neu formen">
              <ToolRow $indent={40}>
                <Tool label="Auswahl begradigen"><StraightenIcon /></Tool>
                <Tool label="Bis flach entspannen"><RelaxIcon bolt /></Tool>
                <Tool label="Entspannen"><RelaxIcon /></Tool>
              </ToolRow>
            </Rollout>

            <Rollout title="Vernähen">
              <ToolRow $indent={22}>
                <Tool label="Auf Ziel vernähen"><StitchIcon kind={0} /></Tool>
                <Tool label="Auf Durchschnitt vernähen"><StitchIcon kind={1} /></Tool>
                <Tool label="Auf Quelle vernähen"><StitchIcon kind={2} /></Tool>
                <Tool label="Vernähen"><StitchIcon kind={3} /></Tool>
              </ToolRow>
            </Rollout>

            <Rollout title="Auflösen" bottom={2}>
              <ToolRow $indent={7}>
                <Tool label="Trennen"><BasketIcon /></Tool>
                <Tool label="Nach Winkel abflachen"><FlattenIcon kind={0} /></Tool>
                <Tool label="Nach Material abflachen"><FlattenIcon kind={1} /></Tool>
                <Tool label="Nach Glättung abflachen"><FlattenIcon kind={2} /></Tool>
                <Tool label="Abflachen"><FlattenIcon kind={3} /></Tool>
              </ToolRow>
              <Group $indent={5} $above={4} $pad={12}>
                <Legend>Verschweißen</Legend>
                <ToolRow>
                  <Tool label="Zielverschweißen"><TargetIcon /></Tool>
                  <Tool label="Auswahl verschweißen"><WeldIcon kind={0} /></Tool>
                  <Tool label="Gemeinsame verschweißen"><WeldIcon kind={1} /></Tool>
                  <Tool label="Nachbarn verschweißen"><WeldIcon kind={2} /></Tool>
                </ToolRow>
              </Group>
            </Rollout>

            <Rollout title="Schälen" bottom={5}>
              <ToolRow $indent={37}>
                <Tool label="Schnell schälen"><PeelIcon kind={0} /></Tool>
                <Tool label="Schälmodus"><PeelIcon kind={1} /></Tool>
                <Tool label="Schälen zurücksetzen"><PeelIcon kind={2} /></Tool>
              </ToolRow>
              <Group $indent={10} $above={1} $pad={9}>
                <Legend>Nadeln:</Legend>
                <ToolRow $gap={1}>
                  <Tool label="Anheften"><PinIcon kind={0} /></Tool>
                  <Tool label="Lösen"><PinIcon kind={1} /></Tool>
                  <Tool label="Automatisch anheften" active><PinIcon kind={2} /></Tool>
                  <Tick />
                  <Tool label="Nadeln auswählen"><PinIcon kind={3} /></Tool>
                </ToolRow>
              </Group>
            </Rollout>

            <Rollout title="Elemente anordnen" bottom={4}>
              <Arrange>
                <IconColumn>
                  <Tool label="Packen"><PackIcon kind={0} /></Tool>
                  <Tool label="Elemente skalieren"><RescaleIcon /></Tool>
                </IconColumn>
                <ArrangeBox>
                  <IconColumn>
                    <Tool label="Zusammen packen"><PackIcon kind={1} /></Tool>
                    <Tool label="Normalisiert packen"><PackIcon kind={2} /></Tool>
                  </IconColumn>
                  <Options>
                    <CheckLabel><CheckBox type="checkbox" defaultChecked />Neu skal.</CheckLabel>
                    <CheckLabel><CheckBox type="checkbox" />Drehen</CheckLabel>
                    <OptionLabel htmlFor="padding">Füllung:</OptionLabel>
                    <FieldRow><NumberBox id="padding" label="Füllung" value="0,02" width={37} /></FieldRow>
                  </Options>
                </ArrangeBox>
              </Arrange>
            </Rollout>
          </Sidebar>
        </Main>

        <Bar $top={1} $bottom={0}>
          <Section>
            <Tool label="Scheitelpunkt"><VertexIcon /></Tool>
            <Tool label="Kante"><EdgeIcon /></Tool>
            <Tool label="Polygon" active><PolygonIcon /></Tool>
            <Tick />
            <Tool label="Element"><ElementIcon /></Tool>
            <Tick />
            <Tool label="Vergrößern"><GrowIcon /></Tool>
            <Tool label="Verkleinern"><GrowIcon shrink /></Tool>
            <Tool label="Schleife"><LoopIcon /></Tool>
            <Tool label="Schleife vergrößern"><LoopIcon sign="+" /></Tool>
            <Tool label="Schleife verkleinern"><LoopIcon sign="-" /></Tool>
            <Tool label="Ring"><LoopIcon ring /></Tool>
            <Tool label="Ring vergrößern"><LoopIcon ring sign="+" /></Tool>
            <Tool label="Ring verkleinern"><LoopIcon ring sign="-" /></Tool>
            <Tool label="Auswahl malen"><BrushIcon /></Tool>
            <Tool label="Pinsel vergrößern"><BrushIcon dot={7} /></Tool>
            <Tool label="Pinsel verkleinern"><BrushIcon dot={4} /></Tool>
          </Section>
          <Section $width={228} $divided>
            <Tool label="Weiche Auswahl"><SoftIcon /></Tool>
            <Field><NumberBox id="falloff" label="Abnahme" value="0,0" width={37} /></Field>
            <Tool label="Linear"><LineIcon /></Tool>
            <Tool label="XY-Raum"><XyIcon /></Tool>
            <Tick />
            <Tool label="Kantenabstand begrenzen" active><SoftIcon limit /></Tool>
            <Field><NumberBox id="edges" label="Kanten" value="16" width={22} /></Field>
          </Section>
        </Bar>

        <Bar $top={2} $bottom={1}>
          <Section>
            <Tool label="Absolut"><AbsoluteIcon /></Tool>
            <Tick />
            {['U', 'V', 'W'].map((axis) => (
              <Field key={axis}>
                <FieldName>{axis}:</FieldName>
                <NumberBox id={`axis-${axis}`} label={axis} value="0,0" width={29} />
              </Field>
            ))}
            <Tick />
          </Section>
          <Section $width={415} $divided>
            <Tool label="Auswahl sperren"><LockIcon /></Tool>
            <Tool label="Ausgewählte Flächen filtern"><FilterIcon /></Tool>
            <Tick />
            <Tool label="Ausblenden"><DisplayIcon /></Tool>
            <Tool label="Einfrieren"><FreezeIcon /></Tool>
            <Tick />
            <Combo>
              <Select aria-label="Material-ID"><option>Alle IDs</option></Select>
              <ComboArrow />
            </Combo>
            <Tool label="Schwenken"><HandIcon /></Tool>
            <Tool label="Zoom"><ZoomIcon /></Tool>
            <Tool label="Zoombereich"><ZoomIcon region /></Tool>
            <Tool label="Zoom Grenzen"><ExtentsIcon /></Tool>
            <Tool label="Fangen"><SnapIcon /></Tool>
          </Section>
        </Bar>
      </Window>
    </>
  );
}
